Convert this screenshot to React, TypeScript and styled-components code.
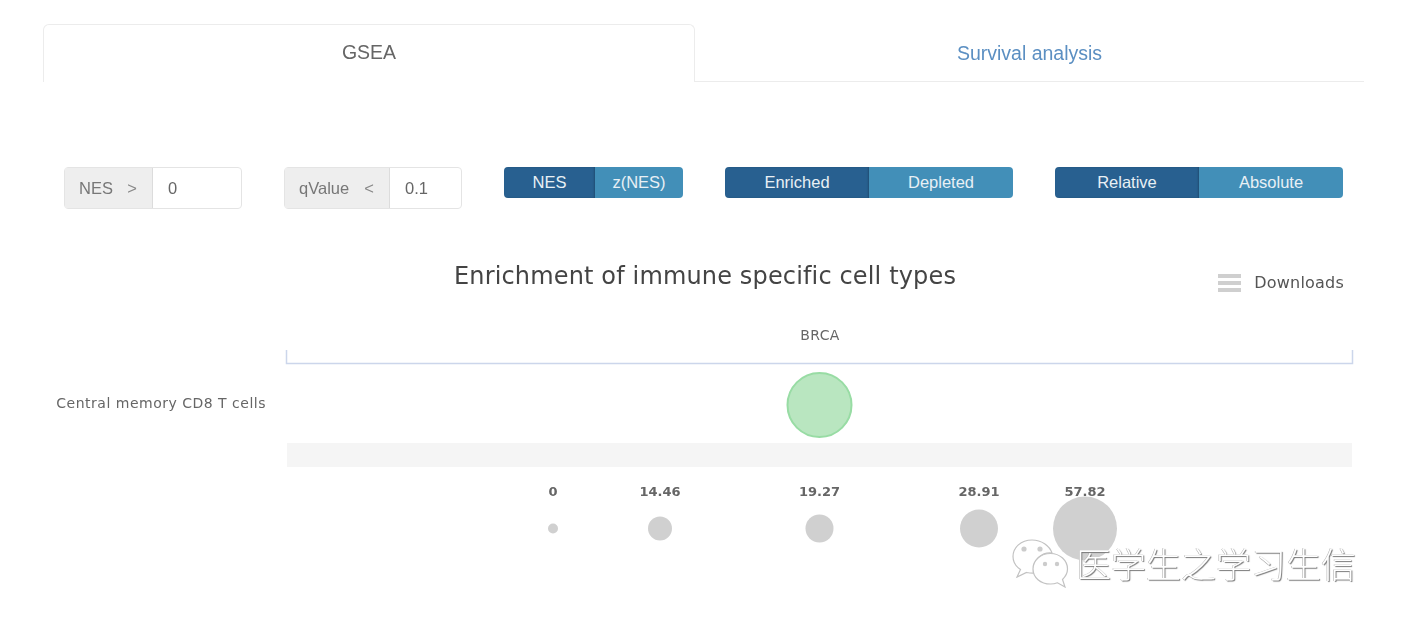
import React from "react";
import styled, { createGlobalStyle } from "styled-components";

const legend = [
  { label: "0", x: 553, r: 5 },
  { label: "14.46", x: 660, r: 12 },
  { label: "19.27", x: 819.5, r: 14 },
  { label: "28.91", x: 979, r: 19 },
  { label: "57.82", x: 1085, r: 32 },
];

export default function App() {
  return (
    <Page>
      <GlobalStyle />
      <TabBar>
        <Tab $active>GSEA</Tab>
        <Tab>Survival analysis</Tab>
      </TabBar>

      <Toolbar>
        <InputGroup $addon={88} $width={178}>
          <Addon>
            NES<Sign>&gt;</Sign>
          </Addon>
          <Value>0</Value>
        </InputGroup>
        <InputGroup $addon={105} $width={178}>
          <Addon>
            qValue<Sign>&lt;</Sign>
          </Addon>
          <Value>0.1</Value>
        </InputGroup>
        <ButtonGroup $width={179} $split={91}>
          <SwitchButton $on>NES</SwitchButton>
          <SwitchButton>z(NES)</SwitchButton>
        </ButtonGroup>
        <ButtonGroup $width={288} $split={144}>
          <SwitchButton $on>Enriched</SwitchButton>
          <SwitchButton>Depleted</SwitchButton>
        </ButtonGroup>
        <ButtonGroup $width={288} $split={144}>
          <SwitchButton $on>Relative</SwitchButton>
          <SwitchButton>Absolute</SwitchButton>
        </ButtonGroup>
      </Toolbar>

      <ChartHeader>
        <ChartTitle>Enrichment of immune specific cell types</ChartTitle>
        <DownloadMenu>
          <MenuIcon>
            <MenuBar />
            <MenuBar />
            <MenuBar />
          </MenuIcon>
          Downloads
        </DownloadMenu>
      </ChartHeader>

      <Plot viewBox="0 320 1401 250" width="1401" height="250">
        <PlotText x="820" y="340" textAnchor="middle" fontSize="14" letterSpacing="0.4">
          BRCA
        </PlotText>
        <path d="M286.5 350V363.5H1352.5V350" fill="none" stroke="#ccd6eb" strokeWidth="1.5" />
        <PlotText x="266" y="408" textAnchor="end" fontSize="14" letterSpacing="0.5">
          Central memory CD8 T cells
        </PlotText>
        <circle cx="819.5" cy="405" r="32" fill="#b9e6c0" stroke="#98dca4" strokeWidth="2" />
        <rect x="287" y="443" width="1065" height="24" fill="#f5f5f5" />
        {legend.map((item) => (
          <g key={item.label}>
            <PlotText x={item.x} y="496" textAnchor="middle" fontSize="13" fontWeight="700">
              {item.label}
            </PlotText>
            <circle cx={item.x} cy="528.5" r={item.r} fill="#d0d0d0" />
          </g>
        ))}
      </Plot>

      <Watermark>
        <svg width="58" height="50" viewBox="0 0 58 50">
          <g fill="#fff" stroke="#c2c2c2" strokeWidth="1.2">
            <path d="M21 2C10 2 2 9.500 2 18.500C2 24 5 28.500 9.500 31.500L6 39L15.500 34.500C18 35 20 35.300 22.500 35.200C21.500 20 32 14 41 15C38.500 7.500 30.500 2 21 2Z" />
            <path d="M39.500 15.500C29.500 15.500 22 22.500 22 31C22 39.500 29.500 46 39.500 46C42 46 44.500 45.500 46.500 44.800L54 49L51.500 41.500C54.500 38.500 56.500 35 56.500 31C56.500 22.500 49 15.500 39.500 15.500Z" />
          </g>
          <g fill="#cccccc">
            <circle cx="13" cy="11" r="2.600" />
            <circle cx="29" cy="11" r="2.600" />
            <circle cx="34" cy="26" r="2.200" />
            <circle cx="46" cy="26" r="2.200" />
          </g>
        </svg>
        <WatermarkText>医学生之学习生信</WatermarkText>
      </Watermark>
    </Page>
  );
}

const GlobalStyle = createGlobalStyle`
  html, body {
    margin: 0;
    padding: 0;
    background: #fff;
  }
`;

const Page = styled.div`
  position: relative;
  box-sizing: border-box;
  width: 1401px;
  height: 627px;
  padding-top: 24px;
  overflow: hidden;
  font-family: "Liberation Sans", Arial, sans-serif;
  color: #666;
  filter: blur(0.4px);
`;

const TabBar = styled.div`
  display: flex;
  width: 1321px;
  height: 58px;
  margin-left: 43px;
`;

const Tab = styled.div<{ $active?: boolean }>`
  flex: 0 0 ${(p) => (p.$active ? "652px" : "669px")};
  box-sizing: border-box;
  display: flex;
  align-items: center;
  justify-content: center;
  padding: ${(p) => (p.$active ? "0 0 2px 0" : "2px 0 0 0")};
  font-size: 19.5px;
  color: ${(p) => (p.$active ? "#666" : "#5b8fc2")};
  border: ${(p) => (p.$active ? "1.5px solid #ececec" : "none")};
  border-bottom: ${(p) => (p.$active ? "none" : "1.5px solid #ececec")};
  border-radius: ${(p) => (p.$active ? "6px 6px 0 0" : "0")};
`;

const Toolbar = styled.div`
  display: flex;
  align-items: flex-start;
  gap: 42px;
  height: 42px;
  margin: 85px 0 0 64px;
`;

const InputGroup = styled.div<{ $addon: number; $width: number }>`
  display: grid;
  grid-template-columns: ${(p) => p.$addon}px 1fr;
  box-sizing: border-box;
  width: ${(p) => p.$width}px;
  height: 42px;
  border: 1.5px solid #e4e4e4;
  border-radius: 4px;
  font-size: 16.5px;
`;

const Addon = styled.div`
  display: flex;
  align-items: center;
  justify-content: space-between;
  padding: 0 15px 0 14px;
  background: #eeeeee;
  border-right: 1px solid #dcdcdc;
  color: #777;
`;

const Sign = styled.span`
  color: #888;
`;

const Value = styled.div`
  display: flex;
  align-items: center;
  padding-left: 15px;
  color: #666;
`;

const ButtonGroup = styled.div<{ $width: number; $split: number }>`
  display: grid;
  grid-template-columns: ${(p) => p.$split}px 1fr;
  width: ${(p) => p.$width}px;
  height: 31px;
  border-radius: 4px;
  overflow: hidden;
`;

const SwitchButton = styled.div<{ $on?: boolean }>`
  display: flex;
  align-items: center;
  justify-content: center;
  font-size: 16.5px;
  color: #e8f0f5;
  background: ${(p) => (p.$on ? "#286090" : "#428fb8")};
  box-shadow: ${(p) => (p.$on ? "inset -1px 0 2px rgba(0, 0, 0, 0.2)" : "none")};
`;

const ChartHeader = styled.div`
  display: flex;
  align-items: flex-start;
  height: 62px;
  margin-top: 49px;
  padding: 0 57px 0 454px;
`;

const ChartTitle = styled.div`
  font-family: "DejaVu Sans", sans-serif;
  font-size: 24px;
  line-height: 36px;
  letter-spacing: 0.15px;
  color: #444;
`;

const DownloadMenu = styled.div`
  display: flex;
  align-items: center;
  gap: 13px;
  margin: 15px 0 0 auto;
  font-family: "DejaVu Sans", sans-serif;
  font-size: 16px;
  line-height: 20px;
  letter-spacing: 0.2px;
  color: #555;
`;

const MenuIcon = styled.div`
  display: flex;
  flex-direction: column;
  gap: 3px;
  width: 23px;
`;

const MenuBar = styled.span`
  height: 4px;
  background: #cfcfcf;
`;

const Plot = styled.svg`
  display: block;
`;

const PlotText = styled.text`
  font-family: "DejaVu Sans", sans-serif;
  fill: #666;
`;

const Watermark = styled.div`
  position: absolute;
  left: 1011px;
  top: 538px;
  display: flex;
  align-items: center;
  gap: 7px;
`;

const WatermarkText = styled.div`
  font-family: "Noto Sans CJK SC", sans-serif;
  font-weight: 300;
  font-size: 35px;
  line-height: 50px;
  color: #fff;
  text-shadow: 1px 1px 1px #777, -0.5px -0.5px 0 #aaa;
  white-space: nowrap;
`;
